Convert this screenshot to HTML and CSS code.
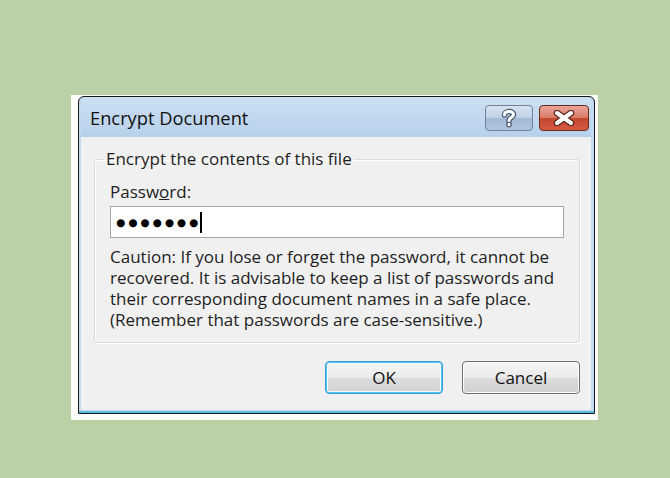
FILE: index.html
```html
<!DOCTYPE html>
<html lang="en">
	<head>
		<meta charset="UTF-8" />
		<title>Encrypt Document</title>
		<link rel="stylesheet" href="styles.css">
	</head>
	<body>
		<div class="shot">
			<div class="window">
				<div class="titlebar">
					<span class="title">Encrypt Document</span>
					<div class="caption-buttons">
						<button class="cap help">
							<svg width="22" height="20" viewBox="0 0 22 20">
								<path d="M6.5 7 C6.5 2.5 15.5 2.5 15.5 6.5 C15.5 9.5 11 9.5 11 12.5 M11 16.2 L11 16.8" fill="none" stroke="#4a5870" stroke-width="5.5" stroke-linecap="round" />
								<path d="M6.5 7 C6.5 2.5 15.5 2.5 15.5 6.5 C15.5 9.5 11 9.5 11 12.5 M11 16.2 L11 16.8" fill="none" stroke="#fff" stroke-width="3" stroke-linecap="round" />
							</svg>
						</button>
						<button class="cap close">
							<svg width="24" height="16" viewBox="0 0 24 16">
								<path d="M5 3 L19 13 M19 3 L5 13" stroke="#5e2a22" stroke-width="6.5" stroke-linecap="round" />
								<path d="M5 3 L19 13 M19 3 L5 13" stroke="#fff" stroke-width="4" stroke-linecap="round" />
							</svg>
						</button>
					</div>
				</div>
				<div class="body">
					<fieldset class="group">
						<legend>Encrypt the contents of this file</legend>
						<label class="field-label" for="pw">Passw<u>o</u>rd:</label>
						<div class="input" id="pw">
							<span class="dots">&#9679;&#9679;&#9679;&#9679;&#9679;&#9679;&#9679;</span><span class="caret"></span>
						</div>
						<p class="caution">
							Caution: If you lose or forget the password, it cannot be<br>
							recovered. It is advisable to keep a list of passwords and<br>
							their corresponding document names in a safe place.<br>
							(Remember that passwords are case-sensitive.)
						</p>
					</fieldset>
					<div class="actions">
						<button class="btn default">OK</button>
						<button class="btn">Cancel</button>
					</div>
				</div>
			</div>
		</div>
	</body>
</html>
```

FILE: styles.css
```css
body {
	margin: 0;
	background: #bad1a5;
	font-family: "Open Sans", "Noto Sans", sans-serif;
	color: #1e1e1e;
}
.shot {
	margin: 95px 0 0 71px;
	width: 527px;
	height: 325px;
	background: #fdfdfb;
	box-sizing: border-box;
	padding: 1px 0 0 7px;
}
.window {
	width: 517px;
	height: 318px;
	border: 1px solid #161616;
	border-radius: 6px 6px 0 0;
	background: #c3d9ef;
	box-sizing: border-box;
	padding: 0 3px 3px 2px;
	display: flex;
	flex-direction: column;
	box-shadow: inset 0 -2px 0 #5cbde3;
}
.titlebar {
	height: 40px;
	display: flex;
	align-items: center;
	justify-content: space-between;
	background: linear-gradient(#cddff2, #b7d0ea);
	border-radius: 5px 5px 0 0;
}
.title {
	font-size: 18.3px;
	margin-left: 9px;
	margin-top: 1px;
	color: #111;
}
.caption-buttons {
	display: flex;
	gap: 6px;
	margin-right: 2px;
	margin-top: 2px;
}
.cap {
	height: 26px;
	border-radius: 4px;
	padding: 0;
	display: flex;
	align-items: center;
	justify-content: center;
}
.help {
	width: 48px;
	border: 1px solid #6f8199;
	background: linear-gradient(#d5e2f0 0%, #bfd0e4 50%, #a3b9d3 51%, #b0c6de 100%);
}
.close {
	width: 50px;
	border: 1px solid #6a2a20;
	background: linear-gradient(#eaa698 0%, #d97a68 50%, #c5462f 51%, #d35a42 100%);
}
.body {
	flex: 1;
	background: #f0f0f0;
	padding: 11px 11px 0 13px;
	display: flex;
	flex-direction: column;
}
.group {
	margin: 0;
	border: 1px solid #dcdcdc;
	border-radius: 3px;
	box-shadow: inset 1px 1px 0 #fff, 1px 1px 0 #fff;
	padding: 11px 15px 8px 15px;
	height: 195px;
	box-sizing: border-box;
}
.group legend {
	font-size: 17px;
	line-height: 22px;
	padding: 0 2px;
	margin-left: -6px;
}
.field-label {
	display: block;
	font-size: 17px;
	line-height: 22px;
}
.field-label u {
	text-decoration-thickness: 1px;
}
.input {
	margin-top: 3px;
	height: 32px;
	border: 1px solid #a6a6a6;
	background: #fff;
	display: flex;
	align-items: center;
	padding-left: 5px;
	box-sizing: border-box;
}
.dots {
	font-family: "DejaVu Sans", sans-serif;
	font-size: 10.5px;
	letter-spacing: 3px;
	margin-right: -2px;
	color: #000;
}
.caret {
	width: 2px;
	height: 21px;
	background: #000;
	margin-left: 1px;
}
.caution {
	margin: 8px 0 0;
	font-size: 17px;
	line-height: 21px;
}
.actions {
	display: flex;
	justify-content: flex-end;
	gap: 19px;
	margin-top: 18px;
}
.btn {
	width: 118px;
	height: 33px;
	border: 1px solid #707070;
	border-radius: 4px;
	background: linear-gradient(#f5f5f5 0%, #ebebeb 50%, #dddddd 51%, #d0d0d0 100%);
	font-family: "Open Sans", "Noto Sans", sans-serif;
	font-size: 17px;
	color: #111;
	box-shadow: inset 0 0 0 1px #fcfcfc;
}
.btn.default {
	border-color: #3c9fd3;
	box-shadow: inset 0 0 0 1px #4fc3f0, inset 0 0 0 2px #f4f9fc;
}
```
